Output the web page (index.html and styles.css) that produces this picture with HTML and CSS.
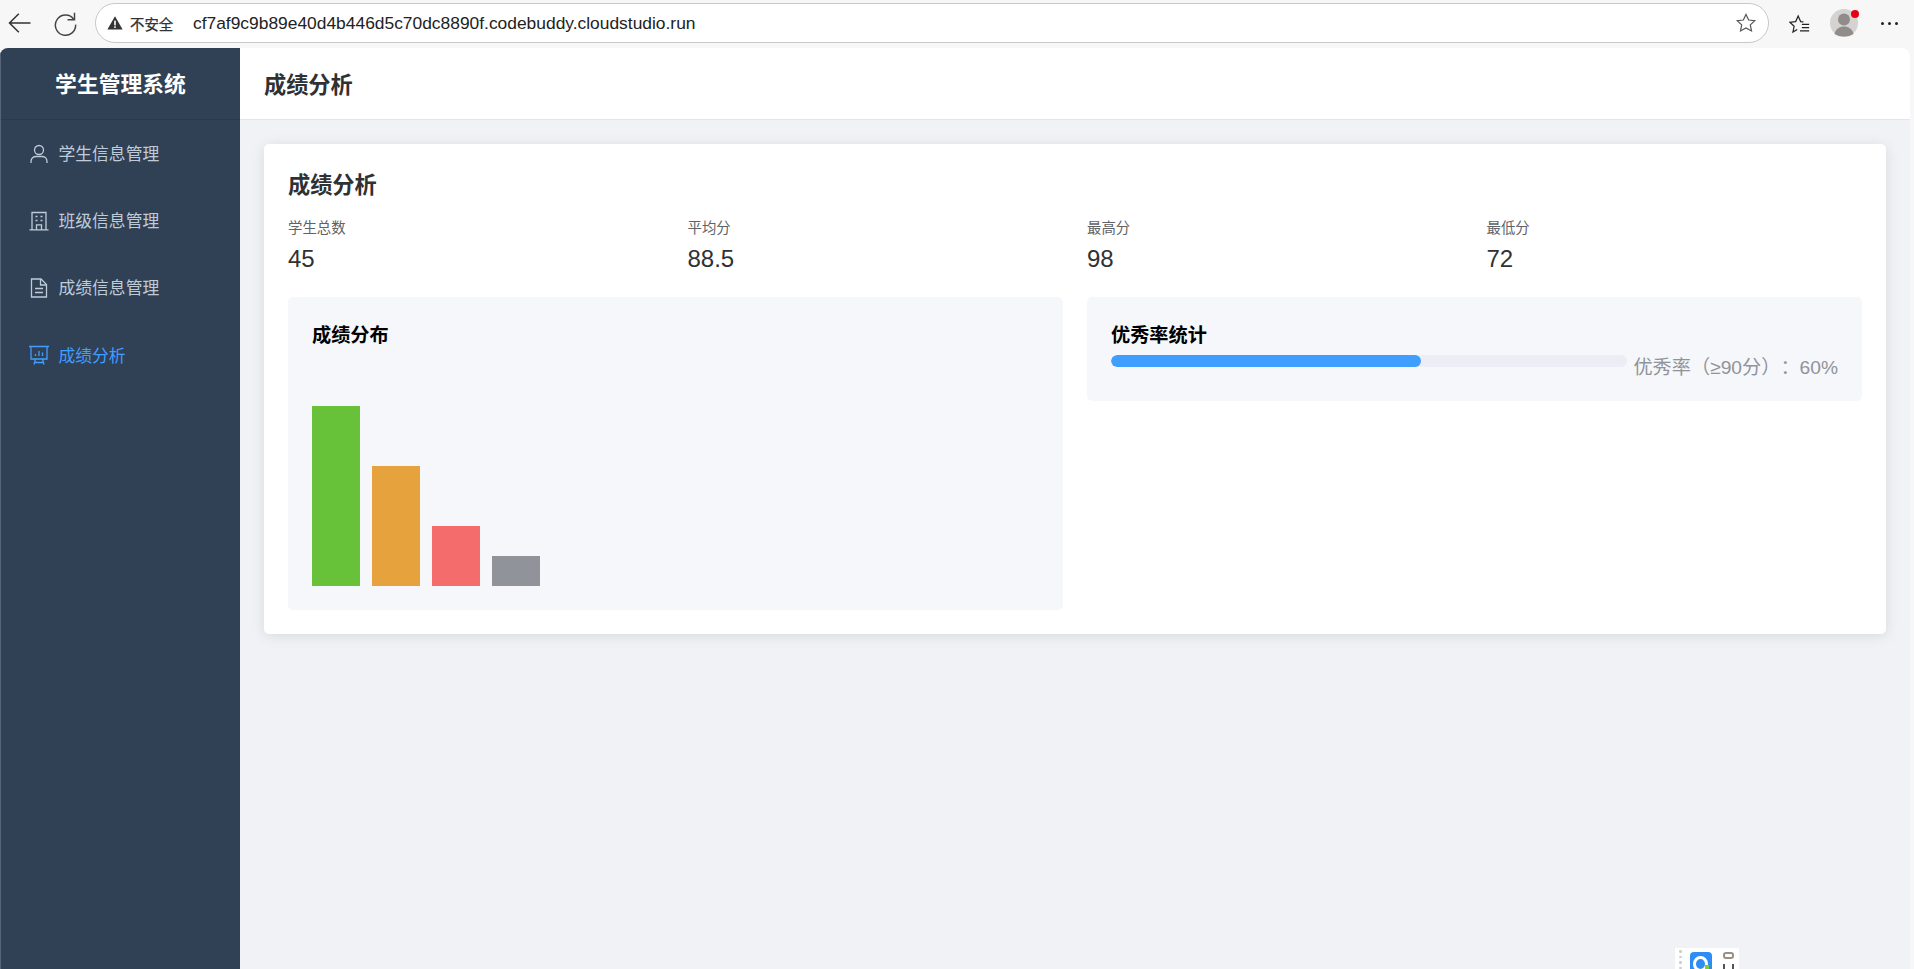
FILE: index.html
```html
<!DOCTYPE html>
<html lang="zh-CN">
<head>
<meta charset="utf-8">
<title>学生管理系统</title>
<link rel="stylesheet" href="styles.css">
</head>
<body>
<div class="toolbar">
  <svg class="tb-back" viewBox="0 0 24 24"><path d="M21 12H3M11 4l-8 8 8 8"/></svg>
  <svg class="tb-reload" viewBox="0 0 24 24"><path d="M19.500 8.500A9 9 0 1 0 21 13"/><path d="M20 2.500v6.200h-6.200"/></svg>
  <div class="urlbar">
    <svg class="warn" viewBox="0 0 16 16"><path d="M8 1.200 15.600 14.600H.4z"/><rect class="warn-mark" x="7.200" y="5.600" width="1.600" height="4.800"/><rect class="warn-mark" x="7.200" y="11.300" width="1.600" height="1.600"/></svg>
    <span class="insecure">不安全</span>
    <span class="url">cf7af9c9b89e40d4b446d5c70dc8890f.codebuddy.cloudstudio.run</span>
    <svg class="star" viewBox="0 0 24 24"><path d="M12 2.600l2.900 6.100 6.700.8-4.900 4.600 1.300 6.600-6-3.300-6 3.300 1.300-6.600L2.400 9.500l6.700-.8z"/></svg>
  </div>
  <svg class="tb-fav" viewBox="0 0 24 24"><path d="M9 18.500l-4.700 2.800 1.300-6.300L1 10.600l6.300-.7L10 3.800l2.700 6.100 3 .3"/><path d="M14 13h8M14 16.500h8M12 20h10"/></svg>
  <div class="avatar">
    <svg viewBox="0 0 28 28"><circle cx="14" cy="10.500" r="6"/><path d="M4.500 25c1-5 5-7.500 9.500-7.500s8.500 2.500 9.500 7.500c-2.500 1.700-6 2.500-9.500 2.500s-7-.8-9.500-2.500z"/></svg>
    <span class="avatar-dot"></span>
  </div>
  <div class="more"><i></i><i></i><i></i></div>
</div>

<div class="window">
  <aside class="sidebar">
    <div class="brand">学生管理系统</div>
    <nav class="menu">
      <a class="menu-item">
        <svg class="menu-icon" viewBox="0 0 20 20"><circle cx="10" cy="6" r="4.500"/><path d="M2 19v-1.500c0-3.200 2.500-5 5-5h6c2.500 0 5 1.800 5 5V19"/></svg>
        <span>学生信息管理</span>
      </a>
      <a class="menu-item">
        <svg class="menu-icon" viewBox="0 0 20 20"><path d="M3 19V1.500h14V19M.5 18.800h19M7.500 18.800v-5h5v5"/><path d="M6.500 5.500h2M11.500 5.500h2M6.500 9.500h2M11.500 9.500h2"/></svg>
        <span>班级信息管理</span>
      </a>
      <a class="menu-item">
        <svg class="menu-icon" viewBox="0 0 20 20"><path d="M2.500 1h9.500l5.500 5.500V19h-15z"/><path d="M11.500 1v6h6M6 10.500h8M6 14.500h8"/></svg>
        <span>成绩信息管理</span>
      </a>
      <a class="menu-item active">
        <svg class="menu-icon" viewBox="0 0 20 20"><path d="M0 1.500h20M2 1.500V14h16V1.500M6.500 14l-1.500 5.500M13.500 14l1.500 5.500M5.500 17.500h9"/><path d="M6.500 11V9M10 11V6M13.500 11V7.500"/></svg>
        <span>成绩分析</span>
      </a>
    </nav>
  </aside>
  <div class="content">
    <header class="topbar">成绩分析</header>
    <main class="main">
      <section class="card">
        <h2 class="card-title">成绩分析</h2>
        <div class="stats">
          <div class="stat"><div class="stat-label">学生总数</div><div class="stat-value">45</div></div>
          <div class="stat"><div class="stat-label">平均分</div><div class="stat-value">88.5</div></div>
          <div class="stat"><div class="stat-label">最高分</div><div class="stat-value">98</div></div>
          <div class="stat"><div class="stat-label">最低分</div><div class="stat-value">72</div></div>
        </div>
        <div class="panels">
          <div class="panel">
            <h3 class="panel-title">成绩分布</h3>
            <div class="chart">
              <div class="bar bar-green"></div>
              <div class="bar bar-orange"></div>
              <div class="bar bar-red"></div>
              <div class="bar bar-gray"></div>
            </div>
          </div>
          <div class="panel">
            <h3 class="panel-title">优秀率统计</h3>
            <div class="progress">
              <div class="track"><div class="fill"></div></div>
              <div class="progress-text">优秀率（≥90分）：60%</div>
            </div>
          </div>
        </div>
      </section>
    </main>
  </div>
</div>

<div class="widget">
  <div class="grip"><i></i><i></i><i></i><i></i></div>
  <div class="widget-logo"><span class="widget-ring"></span><span class="widget-tick"></span></div>
  <div class="widget-side"><span class="widget-top"></span><span class="widget-bottom"></span></div>
</div>
</body>
</html>
```
FILE: styles.css
```css
* { box-sizing: border-box; }
html, body { height: 100%; }
body {
  margin: 0;
  height: 969px;
  overflow: hidden;
  background: #f7f7f7;
  font-family: "Liberation Sans", "Noto Sans CJK SC", sans-serif;
  display: flex;
  flex-direction: column;
}

/* browser chrome */
.toolbar {
  height: 48px;
  flex: none;
  display: flex;
  align-items: center;
  padding: 0 16px 2px 6px;
  background: #f7f7f7;
}
.toolbar svg { fill: none; stroke: #333; stroke-width: 1.3; }
.toolbar .tb-back { width: 28px; height: 28px; margin-right: 18px; flex: none; }
.toolbar .tb-reload { width: 27px; height: 27px; margin-right: 16px; stroke: #444; flex: none; }
.urlbar {
  width: 1674px;
  height: 40px;
  flex: none;
  display: flex;
  align-items: center;
  padding: 0 11px 0 11px;
  background: #fff;
  border: 1px solid #c8c8c8;
  border-radius: 20px;
}
.toolbar .warn { width: 16px; height: 16px; fill: #333; stroke: none; margin-right: 7px; }
.warn-mark { fill: #fff; }
.insecure { font-size: 14.4px; color: #333; width: 63px; flex: none; -webkit-text-stroke: .25px #333; }
.url { font-size: 17.4px; color: #222; flex: 1; white-space: nowrap; }
.toolbar .star { width: 22px; height: 22px; stroke: #555; stroke-width: 1.3; }
.toolbar .tb-fav { width: 23px; height: 23px; margin-left: 20px; stroke: #222; stroke-width: 1.3; }
.avatar {
  position: relative;
  width: 28px;
  height: 28px;
  margin-left: 19px;
  border-radius: 50%;
  background: #d4d3d1;
  overflow: visible;
}
.toolbar .avatar svg { display: block; width: 28px; height: 28px; fill: #8f8c89; stroke: none; }
.avatar-dot {
  position: absolute;
  top: 1px;
  right: -1px;
  width: 8px;
  height: 8px;
  border-radius: 50%;
  background: #e60012;
}
.more { display: flex; gap: 4px; margin-left: 23px; }
.more i { width: 3px; height: 3px; border-radius: 50%; background: #222; }

/* window */
.window {
  flex: 1;
  min-height: 0;
  display: flex;
  margin-right: 4px;
  border-radius: 8px 8px 0 0;
  overflow: hidden;
  background: #f0f2f5;
}
.sidebar {
  width: 240px;
  flex: none;
  background: #304156;
  border-left: 1px solid #56657a;
}
.brand {
  height: 72px;
  padding-bottom: 2px;
  display: flex;
  align-items: center;
  justify-content: center;
  font-size: 21.8px;
  font-weight: 700;
  color: #fff;
  border-bottom: 1px solid #2a394c;
}
.menu { display: flex; flex-direction: column; }
.menu-item {
  height: 67.2px;
  display: flex;
  align-items: center;
  padding-left: 28px;
  gap: 9.500px;
  font-size: 16.8px;
  color: #bfcbd9;
}
.menu-item span { margin-bottom: 1.500px; }
.menu-item.active span { margin-bottom: 0; }
.menu-item.active { color: #409eff; }
.menu-icon {
  width: 20px;
  height: 20px;
  flex: none;
  fill: none;
  stroke: currentColor;
  stroke-width: 1.300;
}

.content { flex: 1; min-width: 0; display: flex; flex-direction: column; }
.topbar {
  height: 72px;
  flex: none;
  display: flex;
  align-items: center;
  padding-left: 24px;
  padding-bottom: 2px;
  background: #fff;
  border-bottom: 1px solid #e6e6e6;
  font-size: 22.2px;
  font-weight: 700;
  color: #303133;
}
.main { flex: 1; padding: 24px 24px 0; }
.card {
  height: 490px;
  padding: 24px;
  background: #fff;
  border-radius: 5px;
  box-shadow: 0 2px 14px rgba(0, 0, 0, .1);
}
.card-title {
  margin: 0;
  height: 36px;
  line-height: 35px;
  font-size: 22.2px;
  font-weight: 700;
  color: #303133;
}
.stats { display: grid; grid-template-columns: repeat(4, 1fr); gap: 24px; margin-top: 14px; }
.stat-label { height: 20px; line-height: 20px; font-size: 14.4px; color: #606266; }
.stat-value { margin-top: 2px; height: 37px; line-height: 37px; font-size: 24px; color: #303133; }
.panels {
  display: grid;
  grid-template-columns: 1fr 1fr;
  gap: 24px;
  align-items: start;
  margin-top: 20px;
}
.panel { padding: 24px; background: #f5f7fa; border-radius: 5px; }
.panel-title {
  margin: 0;
  height: 34px;
  line-height: 29px;
  font-size: 19.2px;
  font-weight: 700;
  color: #000;
}
.chart { height: 231px; display: flex; align-items: flex-end; gap: 12px; }
.bar { width: 48px; }
.bar-green { height: 180px; background: #67c23a; }
.bar-orange { height: 120px; background: #e6a23c; }
.bar-red { height: 60px; background: #f56c6c; }
.bar-gray { height: 30px; background: #909399; }
.progress { display: flex; align-items: flex-start; }
.track { flex: 1; height: 12px; background: #ebeef5; border-radius: 6px; overflow: hidden; }
.fill { width: 60%; height: 100%; background: #409eff; border-radius: 6px; }
.progress-text {
  margin-left: 6px;
  height: 22px;
  line-height: 25px;
  font-size: 19.2px;
  color: #909399;
  white-space: nowrap;
  text-spacing-trim: space-all;
  font-feature-settings: "palt" 0;
}

/* floating widget, cut by the window edge */
.widget {
  position: absolute;
  left: 1675px;
  top: 948px;
  width: 64px;
  height: 21px;
  display: flex;
  background: #fff;
  overflow: hidden;
}
.grip { width: 10px; display: flex; flex-direction: column; gap: 3px; padding: 2px 0 0 4px; }
.grip i { width: 3px; height: 3px; border-radius: 50%; background: #ccc; }
.widget-logo {
  position: relative;
  width: 22px;
  height: 22px;
  margin-left: 5px;
  margin-top: 4px;
  border-radius: 4px;
  background: #2e8df5;
}
.widget-ring {
  position: absolute;
  left: 3px;
  top: 4px;
  width: 15px;
  height: 16px;
  border: 3px solid #fff;
  border-radius: 50%;
}
.widget-tick {
  position: absolute;
  left: 15px;
  top: 13px;
  width: 4px;
  height: 4px;
  background: #7ed321;
}
.widget-side { position: relative; width: 12px; margin-left: 11px; }
.widget-top {
  position: absolute;
  left: 0;
  top: 4px;
  width: 11px;
  height: 7px;
  border: 2px solid #9a8f85;
  border-radius: 3px;
}
.widget-bottom {
  position: absolute;
  left: 0;
  top: 16px;
  width: 11px;
  height: 5px;
  border-left: 2px solid #555;
  border-right: 2px solid #555;
}
```
